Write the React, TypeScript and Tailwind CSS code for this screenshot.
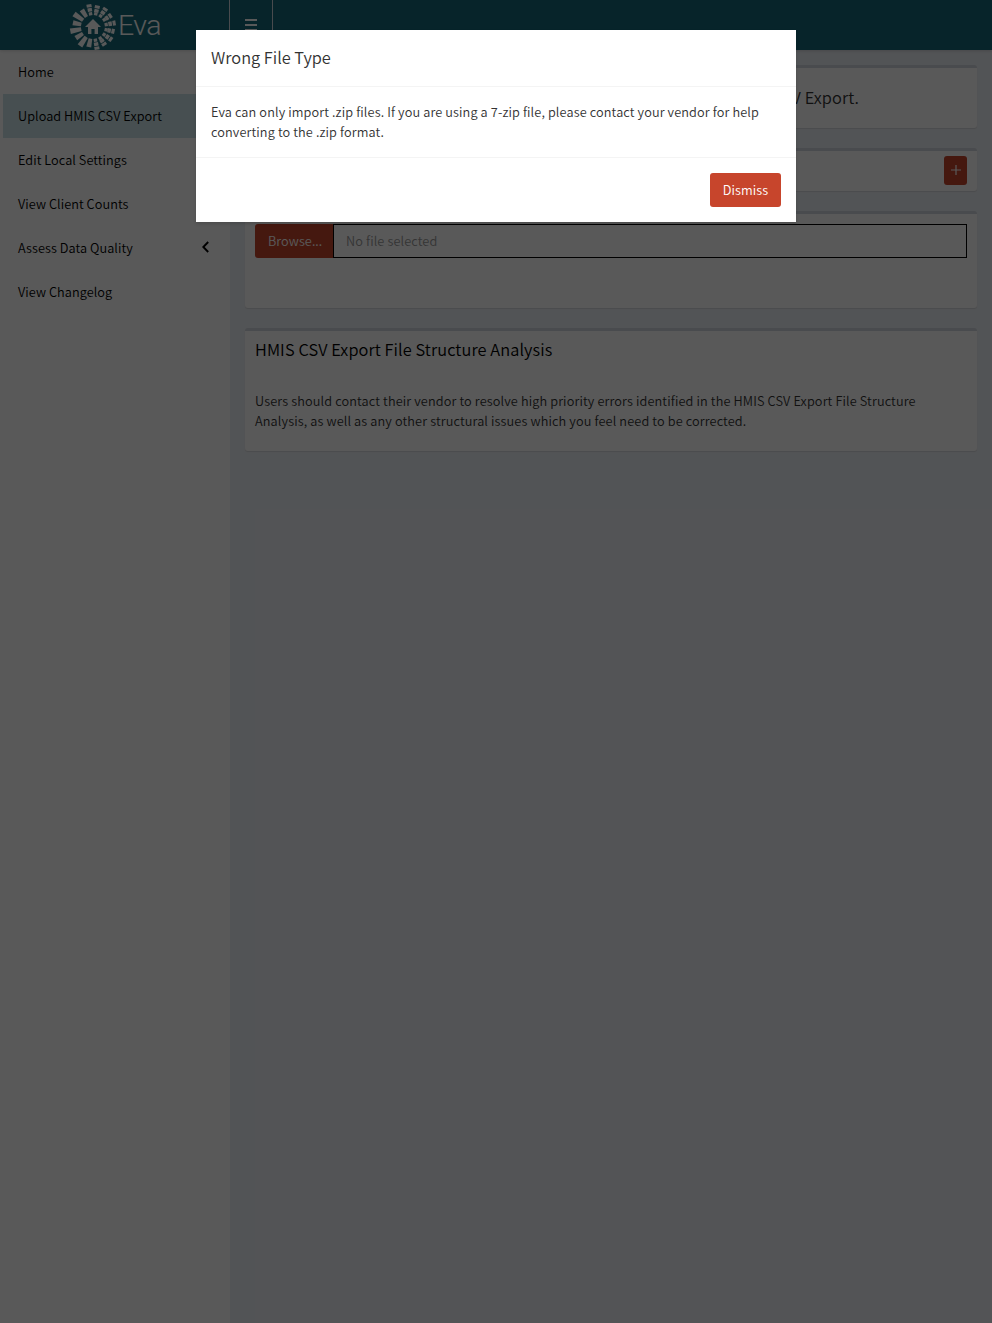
import React from "react";

const nav = [
  { label: "Home" },
  { label: "Upload HMIS CSV Export", active: true },
  { label: "Edit Local Settings" },
  { label: "View Client Counts" },
  { label: "Assess Data Quality", children: true },
  { label: "View Changelog" },
];

const rays = Array.from({ length: 16 }, (_, i) => i * 22.5 + 12);

function Logo() {
  return (
    <div className="flex h-[50px] w-[229px] items-center pl-[69px] text-white">
      <svg viewBox="-24 -24 48 48" className="mt-[3px] h-12 w-12 shrink-0" fill="none" stroke="currentColor">
        {rays.map((a, i) =>
          a > 185 && a < 345 ? (
            <path key={a} transform={`rotate(${a})`} d={i % 2 ? "M-1.9 -12H1.9L2.8 -23H-2.8Z" : "M-1.8 -12H1.8L2.5 -20.5H-2.5Z"} fill="currentColor" stroke="none" />
          ) : (
            <g key={a} transform={`rotate(${a})`}>
              <path d="M0 -11.8V-15" strokeWidth="3.4" />
              <path d={i % 2 ? "M0 -15.6V-19.2" : "M0 -14.9V-18.2"} strokeWidth="4.4" />
              <path d={i % 2 ? "M0 -20V-23" : "M0 -18.9V-22"} strokeWidth="5" />
            </g>
          ),
        )}
        <path d="M0 -8L-8 0H-5V7H-1.6V2H1.6V7H5V0H8Z" fill="currentColor" stroke="none" />
      </svg>
      <span className="mt-[2px] pl-px font-['Roboto',sans-serif] text-[28.5px] font-[350] leading-none tracking-[-0.5px]">Eva</span>
    </div>
  );
}

function Box({ className, children }: { className: string; children?: React.ReactNode }) {
  return (
    <section
      className={`mb-5 rounded-[3px] border-t-[3px] border-[#d2d6de] bg-white shadow-[0_1px_1px_rgba(0,0,0,0.1)] ${className}`}
    >
      {children}
    </section>
  );
}

export default function App() {
  return (
    <div className="relative h-[1323px] w-[992px] overflow-hidden bg-[#ecf0f5] font-['Noto_Sans_CJK_SC',sans-serif] text-[12.72px] font-[350] leading-5 tracking-[0.06px] text-[#333]">
      <header className="relative flex h-[50px] bg-[#16697a] shadow-[0_1px_3px_rgba(0,0,0,0.15)]">
        <Logo />
        <div className="flex w-11 justify-center border-x border-[#d2d6de] pt-[19px]">
          <div className="flex h-3 w-3 flex-col gap-[3px]">
            <i className="h-[2px] bg-white" />
            <i className="h-[2px] bg-white" />
            <i className="h-[2px] bg-white" />
          </div>
        </div>
      </header>
      <div className="flex h-[1273px]">
        <nav className="w-[230px] shrink-0 bg-white text-black">
          {nav.map((n) => (
            <div
              key={n.label}
              className={`flex h-11 items-center border-l-[3px] pl-[15px] pr-[21px] ${
                n.active ? "border-white bg-[#cae3e7] bg-clip-padding" : "border-transparent"
              }`}
            >
              <span>{n.label}</span>
              {n.children && (
                <svg viewBox="0 0 7 12" className="mb-[3px] ml-auto h-3 w-[7px]" fill="none" stroke="currentColor" strokeWidth="1.9">
                  <path d="M6.2 1L1.3 6L6.2 11" />
                </svg>
              )}
            </div>
          ))}
        </nav>
        <main className="w-[762px] px-[15px] pt-[15px]">
          <Box className="flex h-[63px] justify-end pr-[118px] pt-[19px]">
            <h4 className="text-[16.36px] tracking-[0.08px]">CSV Export.</h4>
          </Box>
          <Box className="flex h-[43px] justify-end pr-[10px] pt-[5px]">
            <button className="flex h-[29px] w-[23px] items-center justify-center rounded-[3px] bg-[#c7452c] text-white">
              <svg viewBox="0 0 10 10" className="mb-px h-[10px] w-[10px]" stroke="currentColor" strokeWidth="1.2">
                <path d="M5 0V10M0 5H10" />
              </svg>
            </button>
          </Box>
          <Box className="h-[97px] px-[10px] pt-[10px]">
            <div className="flex h-[34px]">
              <div className="flex w-[78px] items-center rounded-l-[3px] bg-[#c7452c] pl-[13px] text-white">Browse...</div>
              <div className="flex grow items-center border border-black px-3 tracking-[0.12px] text-[#999]">No file selected</div>
            </div>
          </Box>
          <Box className="h-[123px] px-[10px] pt-[8px]">
            <h3 className="text-[16.36px] tracking-[0.08px] text-black">HMIS CSV Export File Structure Analysis</h3>
            <p className="mt-[32px] whitespace-nowrap tracking-[0.13px]">
              Users should contact their vendor to resolve high priority errors identified in the HMIS CSV Export File Structure
              <br />
              Analysis, as well as any other structural issues which you feel need to be corrected.
            </p>
          </Box>
        </main>
      </div>
      <div className="absolute inset-0 bg-black/65 pt-[30px]">
        <div role="dialog" className="mx-auto w-[600px] bg-white shadow-[0_2px_3px_rgba(0,0,0,0.125)]">
          <div className="h-[57px] border-b border-[#f4f4f4] px-[15px] pt-[14px]">
            <h4 className="text-[16.36px] leading-[26px] tracking-normal">Wrong File Type</h4>
          </div>
          <p className="h-[70px] whitespace-nowrap p-[15px] tracking-[0.125px]">
            Eva can only import .zip files. If you are using a 7-zip file, please contact your vendor for help
            <br />
            converting to the .zip format.
          </p>
          <div className="flex justify-end border-t border-[#f4f4f4] p-[15px]">
            <button className="h-[34px] w-[71px] rounded-[3px] bg-[#c7452c] text-white">Dismiss</button>
          </div>
        </div>
      </div>
    </div>
  );
}
